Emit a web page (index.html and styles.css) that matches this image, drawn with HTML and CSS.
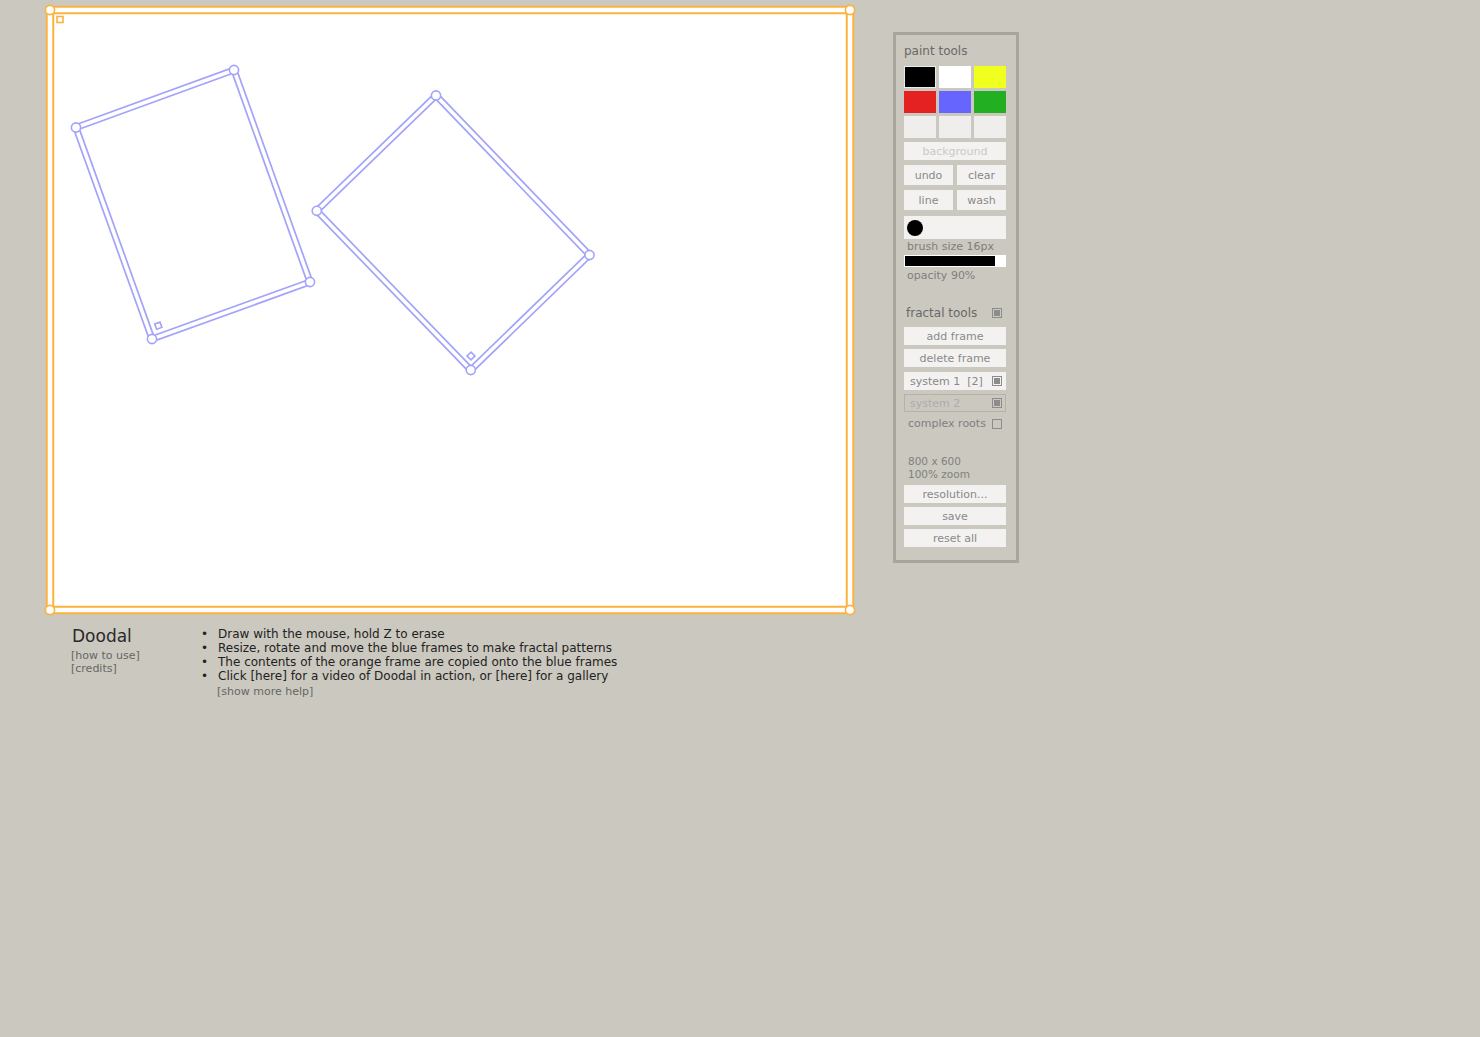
FILE: index.html
```html
<!DOCTYPE html>
<html>
<head>
<meta charset="utf-8">
<title>Doodal</title>
<link rel="stylesheet" href="styles.css">
</head>
<body>
<div class="page">
  <div class="main">
    <svg class="canvas" width="820" height="620" viewBox="40 0 820 620" xmlns="http://www.w3.org/2000/svg">
      <rect x="50" y="10" width="800" height="600" fill="#ffffff"/>
      <g fill="none" stroke-linejoin="miter">
        <polygon points="76,127.5 234,70 310,282 152,339" stroke="#a3a3fa" stroke-width="7"/>
        <polygon points="76,127.5 234,70 310,282 152,339" stroke="#ffffff" stroke-width="3.6"/>
        <polygon points="436,95.5 589.5,255 470.8,370 316.8,210.8" stroke="#a3a3fa" stroke-width="7"/>
        <polygon points="436,95.5 589.5,255 470.8,370 316.8,210.8" stroke="#ffffff" stroke-width="3.6"/>
        <rect x="50" y="10" width="800" height="600" stroke="#fcb23e" stroke-width="8.5"/>
        <rect x="50" y="10" width="800" height="600" stroke="#ffffff" stroke-width="4.5"/>
      </g>
      <g fill="#ffffff" stroke="#a3a3fa" stroke-width="1.6">
        <circle cx="76" cy="127.5" r="4.6"/>
        <circle cx="234" cy="70" r="4.6"/>
        <circle cx="310" cy="282" r="4.6"/>
        <circle cx="152" cy="339" r="4.6"/>
        <rect x="-2.8" y="-2.8" width="5.6" height="5.6" transform="translate(158.3 325.7) rotate(-20)"/>
        <circle cx="436" cy="95.5" r="4.6"/>
        <circle cx="589.5" cy="255" r="4.6"/>
        <circle cx="470.8" cy="370" r="4.6"/>
        <circle cx="316.8" cy="210.8" r="4.6"/>
        <rect x="-2.8" y="-2.8" width="5.6" height="5.6" transform="translate(471 356) rotate(-45)"/>
      </g>
      <g fill="#ffffff" stroke="#fcb23e" stroke-width="1.6">
        <circle cx="50" cy="10" r="4.6"/>
        <circle cx="850" cy="10" r="4.6"/>
        <circle cx="50" cy="610" r="4.6"/>
        <circle cx="850" cy="610" r="4.6"/>
        <rect x="57" y="16.5" width="6" height="6"/>
      </g>
    </svg>
    <div class="info">
      <div class="title">
        <div class="name">Doodal</div>
        <div class="link first">[how to use]</div>
        <div class="link">[credits]</div>
      </div>
      <div class="help">
        <ul>
          <li>Draw with the mouse, hold Z to erase</li>
          <li>Resize, rotate and move the blue frames to make fractal patterns</li>
          <li>The contents of the orange frame are copied onto the blue frames</li>
          <li>Click [here] for a video of Doodal in action, or [here] for a gallery</li>
        </ul>
        <div class="more">[show more help]</div>
      </div>
    </div>
  </div>

  <div class="panel">
    <div class="hd">paint tools</div>
    <div class="swatches">
      <div class="sw sel c-black"></div>
      <div class="sw c-white"></div>
      <div class="sw c-yellow"></div>
      <div class="sw c-red"></div>
      <div class="sw c-blue"></div>
      <div class="sw c-green"></div>
      <div class="sw c-empty"></div>
      <div class="sw c-empty"></div>
      <div class="sw c-empty"></div>
    </div>
    <div class="btn bgbtn">background</div>
    <div class="pair">
      <div class="btn tall">undo</div>
      <div class="btn tall">clear</div>
    </div>
    <div class="pair">
      <div class="btn tall">line</div>
      <div class="btn tall">wash</div>
    </div>
    <div class="slider"><div class="dot"></div></div>
    <div class="lbl">brush size 16px</div>
    <div class="bar"><div class="fill" style="width:90%"></div></div>
    <div class="lbl op">opacity 90%</div>

    <div class="hd2"><span>fractal tools</span><span class="cb on"></span></div>
    <div class="btn addf">add frame</div>
    <div class="btn delf">delete frame</div>
    <div class="btn sys sys1"><span>system 1&nbsp; [2]</span><span class="cb on"></span></div>
    <div class="btn sys sys2"><span>system 2</span><span class="cb on"></span></div>
    <div class="opt"><span>complex roots</span><span class="cb"></span></div>

    <div class="res">800 x 600<br>100% zoom</div>
    <div class="btn resb">resolution...</div>
    <div class="btn gap4">save</div>
    <div class="btn gap4">reset all</div>
  </div>
</div>
</body>
</html>
```

FILE: styles.css
```css
html, body {
  margin: 0;
  padding: 0;
  background: #cbc8bf;
  font-family: "DejaVu Sans", Verdana, sans-serif;
}

.page {
  display: flex;
  align-items: flex-start;
  padding-left: 40px;
}

.main {
  width: 820px;
}

.canvas {
  display: block;
}

.info {
  display: flex;
  margin-top: 5px;
}

.title {
  width: 129px;
  padding-left: 32px;
}

.name {
  font-size: 17px;
  line-height: 20px;
  color: #2a2a2a;
  padding-top: 1px;
}

.link {
  font-size: 11px;
  line-height: 13px;
  color: #666;
  margin-left: -1px;
}

.link.first {
  margin-top: 3px;
}

.help {
  margin-top: 2px;
}

.help ul {
  list-style: none;
  margin: 0;
  padding: 0;
}

.help li {
  font-size: 12px;
  line-height: 14px;
  color: #222;
}

.help li::before {
  content: "\2022";
  display: inline-block;
  width: 17px;
}

.more {
  font-size: 11px;
  line-height: 13px;
  color: #666;
  margin-top: 2px;
  padding-left: 16px;
}

/* panel */
.panel {
  margin-top: 32px;
  margin-left: 33px;
  width: 102px;
  padding: 9px 10px 13px 8px;
  border: 3px solid #a8a59d;
}

.hd {
  font-size: 12px;
  line-height: 15px;
  color: #686868;
}

.swatches {
  display: grid;
  grid-template-columns: repeat(3, 1fr);
  gap: 3px 3.5px;
  margin-top: 7px;
}

.sw {
  height: 22px;
  box-sizing: border-box;
}

.sw.sel {
  border: 1px solid #ecebe8;
}

.c-black { background: #000000; }
.c-white { background: #ffffff; }
.c-yellow { background: #f0ff1e; }
.c-red { background: #e42222; }
.c-blue { background: #6666ff; }
.c-green { background: #22b022; }
.c-empty { background: #efeeec; }

.btn {
  background: #f3f2f0;
  height: 18px;
  padding-top: 1px;
  line-height: 17px;
  font-size: 11px;
  text-align: center;
  color: #898989;
  box-sizing: border-box;
}

.bgbtn {
  margin-top: 4px;
  color: #c9c9c9;
}

.pair {
  display: flex;
  gap: 4px;
  margin-top: 5px;
}

.pair .btn {
  flex: 1;
}

.btn.tall {
  height: 20px;
  line-height: 19px;
}

.slider {
  margin-top: 6px;
  height: 23px;
  background: #f3f2f0;
  display: flex;
  align-items: center;
  padding-left: 3px;
}

.dot {
  width: 16px;
  height: 16px;
  border-radius: 50%;
  background: #000;
}

.lbl {
  font-size: 11px;
  line-height: 13px;
  color: #7e7e7e;
  padding-left: 3px;
  margin-top: 1px;
}

.bar {
  margin-top: 2px;
  height: 12px;
  background: #ffffff;
  padding: 1px;
  box-sizing: border-box;
}

.fill {
  height: 10px;
  background: #000;
}

.lbl.op {
  margin-top: 2px;
}

.hd2 {
  display: flex;
  justify-content: space-between;
  align-items: center;
  margin-top: 23px;
  font-size: 12px;
  line-height: 16px;
  color: #686868;
  padding: 0 4px 0 2px;
}

.cb {
  width: 10px;
  height: 10px;
  box-sizing: border-box;
  border: 1px solid #8c8c8c;
  padding: 1px;
  display: inline-block;
}

.cb.on::after {
  content: "";
  display: block;
  width: 6px;
  height: 6px;
  background: #8c8c8c;
}

.addf {
  margin-top: 6px;
}

.delf {
  margin-top: 4px;
}

.sys {
  display: flex;
  justify-content: space-between;
  align-items: center;
  text-align: left;
  padding: 0 4px 0 6px;
}

.sys1 {
  margin-top: 5px;
  color: #888;
}

.sys2 {
  margin-top: 4px;
  background: transparent;
  border: 1px solid #b5b2aa;
  color: #acacac;
  padding: 0 3px 0 5px;
}

.opt {
  display: flex;
  justify-content: space-between;
  align-items: center;
  margin-top: 5px;
  font-size: 11px;
  line-height: 13px;
  color: #808080;
  padding: 0 4px 0 4px;
}

.res {
  margin-top: 25px;
  font-size: 10.5px;
  line-height: 13px;
  color: #808080;
  padding-left: 4px;
}

.resb {
  margin-top: 4px;
}

.gap4 {
  margin-top: 4px;
}
```
